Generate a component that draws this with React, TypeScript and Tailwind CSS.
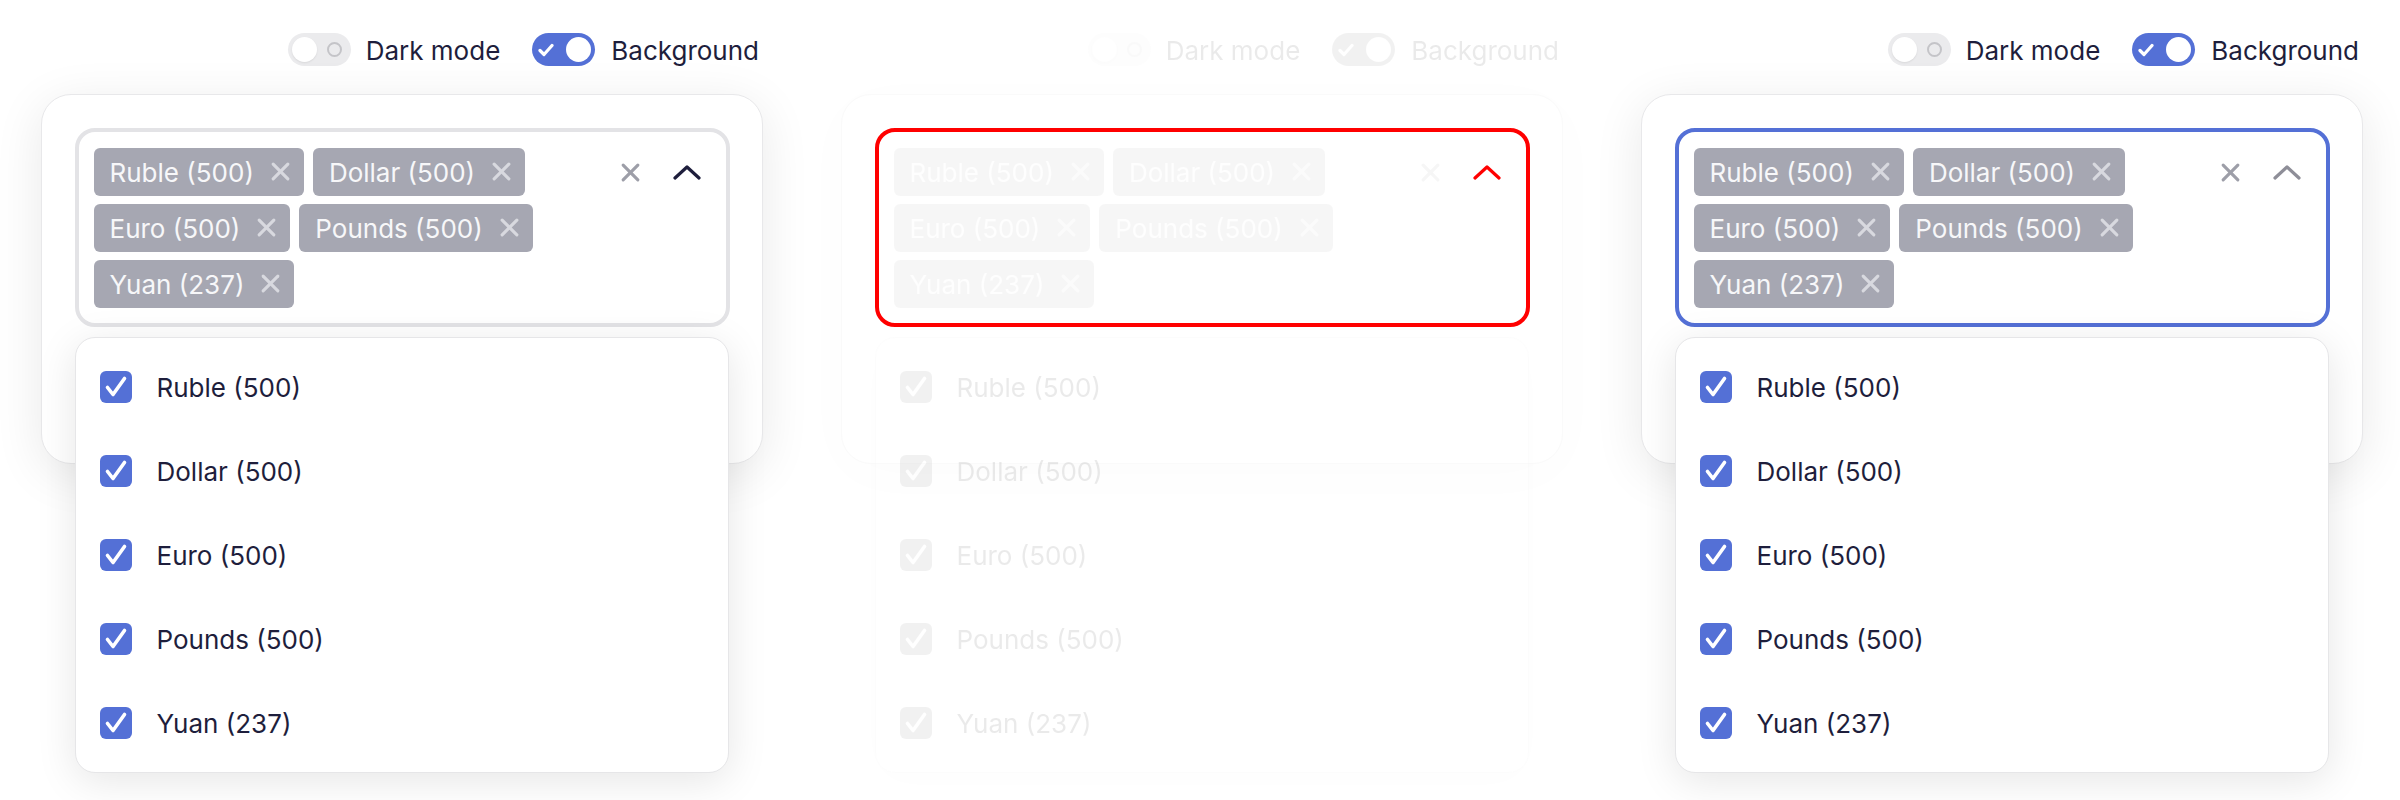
import React from 'react';

type Variant = 'default' | 'diff' | 'focus';

const options = ['Ruble (500)', 'Dollar (500)', 'Euro (500)', 'Pounds (500)', 'Yuan (237)'];

const XIcon = ({ className }: { className: string }) => (
  <svg viewBox="0 0 20 20" className={className} fill="none" stroke="currentColor" strokeWidth={3} strokeLinecap="round">
    <line x1="3" y1="3" x2="17" y2="17" />
    <line x1="17" y1="3" x2="3" y2="17" />
  </svg>
);

const Toggle = ({ on }: { on: boolean }) =>
  on ? (
    <div className="w-[63px] h-[33px] rounded-full bg-[#5470d6] flex items-center justify-between pl-[6px] pr-[4px]">
      <svg viewBox="0 0 16 16" className="w-[16px] h-[16px]" fill="none" stroke="white" strokeWidth={3.2} strokeLinecap="round" strokeLinejoin="round">
        <polyline points="2,8.5 6,12.5 14,3.5" />
      </svg>
      <div className="w-[25px] h-[25px] rounded-full bg-white" />
    </div>
  ) : (
    <div className="w-[63px] h-[33px] rounded-full bg-[#ebebed] flex items-center justify-between pl-[4px] pr-[9px]">
      <div className="w-[25px] h-[25px] rounded-full bg-white shadow-[0_1px_2px_rgba(0,0,0,0.08)]" />
      <div className="w-[15px] h-[15px] rounded-full border-2 border-[#c4c4c8]" />
    </div>
  );

const Chip = ({ label }: { label: string }) => (
  <div className="h-[48px] rounded-[6px] bg-[#a6a7b2] flex items-center pl-[16px] pr-[13px] gap-[16px] text-[#f7f7f9]">
    <span className="pt-[2px]">{label}</span>
    <XIcon className="w-[21px] h-[21px] text-[#d8d9df]" />
  </div>
);

const Panel = ({ variant }: { variant: Variant }) => {
  const diff = variant === 'diff';
  const fade = diff ? 'opacity-[0.09] grayscale' : '';
  const border = variant === 'diff' ? 'border-[#ff0000]' : variant === 'focus' ? 'border-[#5470d6]' : 'border-[#e3e3e6]';
  const chevron = variant === 'diff' ? 'text-[#ff0000]' : variant === 'focus' ? 'text-[#8e8e98]' : 'text-[#1e1e3c]';

  return (
    <div className="w-[800px] h-[800px] pt-[33px]">
      <div className={`flex justify-end items-center gap-[32px] pr-[41px] h-[33px] ${fade}`}>
        <div className="flex items-center gap-[15px]">
          <Toggle on={false} />
          <span className="pt-[2px]">Dark mode</span>
        </div>
        <div className="flex items-center gap-[16px]">
          <Toggle on={true} />
          <span className="pt-[2px]">Background</span>
        </div>
      </div>

      <div
        className={`relative ml-[41px] mt-[28px] w-[722px] rounded-[30px] bg-white border-[1.5px] p-[32.5px] pb-[136px] ${
          diff ? 'border-[#fafafa] shadow-[0_10px_60px_rgba(0,0,0,0.015)]' : 'border-[#e8e8ea] shadow-[0_10px_50px_rgba(0,0,0,0.09)]'
        }`}
      >
        <div className={`h-[199px] rounded-[20px] border-4 ${border} bg-white flex pl-[15px] pr-[25px] pt-[16px] pb-[16px]`}>
          <div className={`flex flex-wrap content-start gap-x-[9px] gap-y-[8px] w-[511px] ${fade}`}>
            {options.map((o) => (
              <Chip key={o} label={o} />
            ))}
          </div>
          <div className="flex-1 flex items-start justify-end gap-[32px] h-[48px] pt-[14px]">
            <XIcon className={`w-[21px] h-[21px] text-[#9d9ea8] ${fade}`} />
            <svg viewBox="0 0 28 16" className={`w-[28px] h-[16px] mt-[2px] ${chevron}`} fill="none" stroke="currentColor" strokeWidth={3.2} strokeLinecap="round" strokeLinejoin="round">
              <polyline points="2,14 14,3 26,14" />
            </svg>
          </div>
        </div>

        <div
          className={`absolute left-[32.5px] top-[241.5px] w-[654px] rounded-[20px] bg-white border-[1.5px] border-[#e6e6e8] py-[7px] shadow-[0_8px_40px_rgba(0,0,0,0.1)] ${fade}`}
        >
          {options.map((o) => (
            <div key={o} className="h-[84px] flex items-center pl-[24px] gap-[25px] text-[#1e1e3c]">
              <div className="w-[32px] h-[32px] rounded-[6px] bg-[#5470d6] flex items-center justify-center">
                <svg viewBox="0 0 32 32" className="w-[32px] h-[32px]" fill="none" stroke="white" strokeWidth={3.6} strokeLinecap="round" strokeLinejoin="round">
                  <polyline points="7.5,16.5 13,23.5 24.5,7.5" />
                </svg>
              </div>
              <span className="pt-[2px]">{o}</span>
            </div>
          ))}
        </div>
      </div>
    </div>
  );
};

export default function App() {
  return (
    <div className="flex w-[2400px] h-[800px] bg-white overflow-hidden font-['Inter',sans-serif] text-[26px] leading-none text-[#1e1e3c]">
      <Panel variant="default" />
      <Panel variant="diff" />
      <Panel variant="focus" />
    </div>
  );
}
